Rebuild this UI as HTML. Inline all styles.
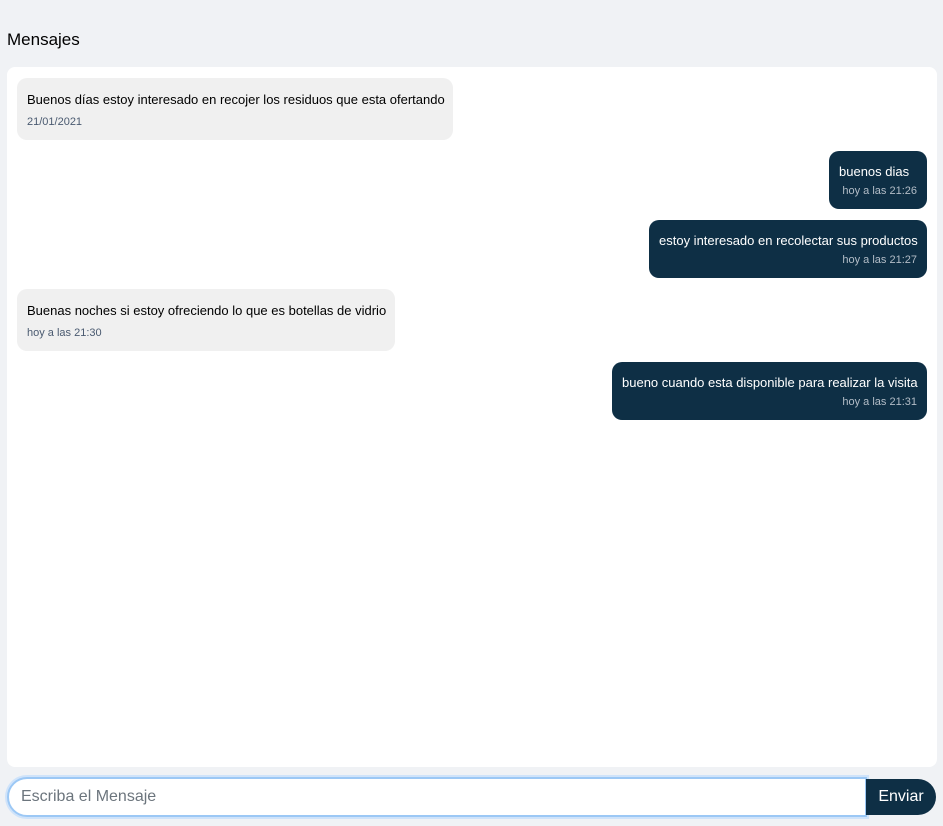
<!DOCTYPE html>
<html><head><meta charset="utf-8"><style>
body{margin:0;width:943px;height:826px;background:#f0f2f5;font-family:"Liberation Sans",Arial,sans-serif;position:relative;overflow:hidden}
.t{position:absolute;left:7px;top:30px;font-size:17px;color:#000}
.p{position:absolute;left:7px;top:67px;width:930px;height:700px;background:#fff;border-radius:8px}
.b{position:absolute;box-sizing:border-box;padding:13px 10px 0 10px;border-radius:10px;font-size:13px;white-space:nowrap;line-height:16px}
.l{background:#f0f0f0;color:#000;padding-top:14px}
.l .d{color:#4a5a70;margin-top:8px}
.r{background:#0e2f45;color:#fff}
.r .d{color:#b3bdc7;text-align:right}
.d{font-size:11px;margin-top:5px;line-height:13px}
.in{position:absolute;left:7px;top:777px;width:860px;height:40px;box-sizing:border-box;border:2px solid #9cc8f5;border-radius:20px 0 0 20px;background:#fff;box-shadow:0 0 0 2px #cfe3fa;font-size:16px;color:#6c757d;padding:9px 0 0 12px}
.btn{position:absolute;left:866px;top:779px;width:70px;height:36px;background:#0e2f45;color:#fff;border-radius:0 18px 18px 0;font-size:16px;line-height:36px;text-align:center}
</style></head><body>
<div class="t">Mensajes</div>
<div class="p"></div>
<div class="b l" style="left:17px;top:78px;width:436px;height:62px">Buenos días estoy interesado en recojer los residuos que esta ofertando<div class="d">21/01/2021</div></div>
<div class="b r" style="left:829px;top:151px;width:98px;height:58px">buenos dias<div class="d">hoy a las 21:26</div></div>
<div class="b r" style="left:649px;top:220px;width:278px;height:58px">estoy interesado en recolectar sus productos<div class="d">hoy a las 21:27</div></div>
<div class="b l" style="left:17px;top:289px;width:378px;height:62px">Buenas noches si estoy ofreciendo lo que es botellas de vidrio<div class="d">hoy a las 21:30</div></div>
<div class="b r" style="left:612px;top:362px;width:315px;height:58px">bueno cuando esta disponible para realizar la visita<div class="d">hoy a las 21:31</div></div>
<div class="in">Escriba el Mensaje</div>
<div class="btn">Enviar</div>
</body></html>
